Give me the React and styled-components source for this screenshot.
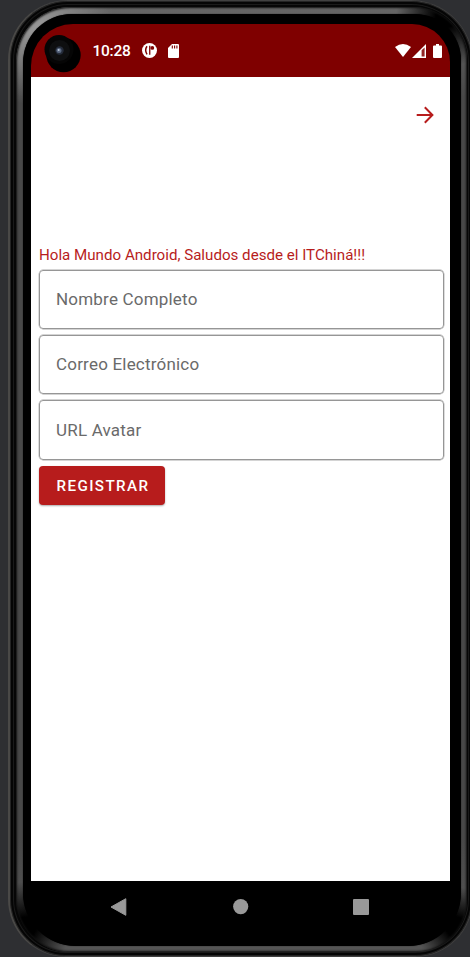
import React from "react";
import styled, { createGlobalStyle } from "styled-components";

const GlobalStyle = createGlobalStyle`
  * { box-sizing: border-box; }
  body { margin: 0; background: #2e2f32; font-family: Roboto, sans-serif; }
`;

const Desk = styled.main`
  width: 470px;
  height: 957px;
  overflow: hidden;
  padding-left: 8px;
  background: #2e2f32;
`;

const Casing = styled.div`
  width: 465px;
  height: 957px;
  padding: 6px 5px 4px 6px;
  border: 1px solid #414141;
  border-left: 2px solid #4a4947;
  border-radius: 60px 62px 58px 58px;
  background: #060606;
  box-shadow: inset 0 0 0 1px #242424, inset 0 0 0 3px #050505,
    inset 0 0 0 4px #1a1a1a;
`;

const Bezel = styled.div`
  height: 100%;
  padding: 7px 6px 6px 7px;
  border-radius: 55px 53px 51px 53px;
  background:
    radial-gradient(circle at 24px 24px, #9b9b9b 0, #77777700 75px),
    radial-gradient(circle at 10px 920px, #000 10px, #0000 45px),
    radial-gradient(circle at 440px 920px, #000 10px, #0000 40px),
    radial-gradient(circle at 430px 10px, #000 10px, #0000 50px),
    linear-gradient(#666, #484848 90px, #484848 830px, #555 930px);
  box-shadow: inset 0 0 2px 1px #111;
`;

const Glass = styled.div`
  height: 100%;
  padding: 10px 10px 0 8px;
  border-radius: 49px 46px 53px 53px;
  background: #000;
  box-shadow: 0 0 1px #000;
`;

const Screen = styled.div`
  width: 419px;
  height: 857px;
  display: flex;
  flex-direction: column;
`;

const StatusBar = styled.header`
  height: 53px;
  flex: none;
  display: flex;
  align-items: center;
  padding: 8px 8px 8px 13px;
  border-radius: 42px 38px 0 0;
  background: #7f0000;
  color: #fff;
`;

const CameraSlot = styled.span`
  padding-top: 7px;
`;

const Clock = styled.time`
  margin: 1px 12px 0 11.5px;
  width: 37.5px;
  font-size: 15.5px;
  font-weight: 500;
  line-height: 18px;
  letter-spacing: -0.25px;
  white-space: nowrap;
`;

const Glyph = styled.svg`
  display: block;
  flex: none;
  margin-left: ${(p) => p.$gap || 0}px;
`;

const Spacer = styled.span`
  flex: 1;
`;

const Content = styled.section`
  flex: 1;
  background: #fff;
`;

const Toolbar = styled.div`
  height: 76px;
  display: flex;
  justify-content: flex-end;
  align-items: center;
  padding-right: 16px;
`;

const IconButton = styled.button`
  display: block;
  border: 0;
  padding: 0;
  background: none;
  color: #b71c1c;
`;

const Form = styled.form`
  display: flex;
  flex-direction: column;
  align-items: flex-start;
  padding: 92px 6px 0 8px;
`;

const Greeting = styled.p`
  margin: 0 0 4px;
  height: 21px;
  line-height: 21px;
  font-size: 15.13px;
  white-space: nowrap;
  color: #b71c1c;
`;

const Field = styled.label`
  width: 404.5px;
  height: 59.3px;
  margin-bottom: 5.9px;
  padding: 0 16px 1px;
  border: 1px solid #969696;
  box-shadow: 0 0 0 0.4px #aaa;
  border-radius: 4px;
  display: flex;
  align-items: center;
  font-size: 17px;
  letter-spacing: 0.2px;
  color: #6a6a6a;
`;

const SubmitButton = styled.button`
  width: 126px;
  height: 39px;
  padding: 1px 0 0 2px;
  border: 0;
  border-radius: 4px;
  background: #b71c1c;
  box-shadow: 0 1px 2px #0005;
  color: #fff;
  font: 500 15.2px/39px Roboto, sans-serif;
  letter-spacing: 1.4px;
  white-space: nowrap;
`;

const NavBar = styled.nav`
  height: 52px;
  width: 419px;
  display: flex;
  align-items: center;
  padding-left: 79px;
`;

const fields = ["Nombre Completo", "Correo Electrónico", "URL Avatar"];

function CameraCutout() {
  return (
    <CameraSlot>
      <Glyph width="37" height="38" viewBox="0 0 37 38">
        <circle cx="19.5" cy="20" r="17.2" fill="#000" />
        <circle cx="15" cy="14.5" r="14.5" fill="#050505" />
        <circle cx="15.5" cy="15.5" r="10.5" fill="#0e0f10" />
        <circle cx="15.5" cy="15.5" r="4.2" fill="#252c3a" />
        <circle cx="15" cy="15.5" r="2.5" fill="#59677f" />
        <circle cx="14.7" cy="15" r="1" fill="#b7c5d5" />
      </Glyph>
    </CameraSlot>
  );
}

export default function App() {
  return (
    <Desk>
      <GlobalStyle />
      <Casing>
        <Bezel>
          <Glass>
            <Screen>
              <StatusBar>
                <CameraCutout />
                <Clock>10:28</Clock>
                <Glyph width="15" height="15" viewBox="0 0 15 15">
                  <circle cx="7.5" cy="7.5" r="7.5" fill="#fff" />
                  <path d="M5 3.2Q2.3 7 5 11.3" fill="none" stroke="#7f0000" strokeWidth="1.5" />
                  <path d="M7.1 2.8h1.3v9H7.1z" fill="#7f0000" />
                  <circle cx="10.3" cy="4.9" r="1.9" fill="#7f0000" />
                </Glyph>
                <Glyph $gap={11} width="11" height="14" viewBox="0 0 11 14">
                  <path d="M4 0h6q1 0 1 1v12q0 1-1 1H1q-1 0-1-1V4z" fill="#fff" />
                  <path d="M4.3 1.5v3M6.6 1.5v3M8.9 1.5v3" stroke="#7f0000" strokeWidth="1.1" />
                </Glyph>
                <Spacer />
                <Glyph width="16" height="13" viewBox="0 0 16 13">
                  <path d="M0 3Q8-3 16 3L8 13z" fill="#fff" />
                </Glyph>
                <Glyph $gap={1} width="14" height="14" viewBox="0 0 14 14">
                  <path d="M14 0v14H0z" fill="#fff" />
                  <path d="M9.6 6.2 12.6 3.4v9h-3z" fill="#7f0000" opacity=".85" />
                </Glyph>
                <Glyph $gap={7} width="9" height="14" viewBox="0 0 9 14">
                  <path d="M3 0h3v1.4h2q1 0 1 1V13q0 1-1 1H1q-1 0-1-1V2.4q0-1 1-1h2z" fill="#fff" />
                </Glyph>
              </StatusBar>
              <Content>
                <Toolbar>
                  <IconButton aria-label="Siguiente">
                    <Glyph width="18" height="18" viewBox="0 0 18 18">
                      <path d="M.7 9h15.5M8.8 1.3 16.4 9l-7.6 7.7" fill="none" stroke="currentColor" strokeWidth="2" />
                    </Glyph>
                  </IconButton>
                </Toolbar>
                <Form>
                  <Greeting>Hola Mundo Android, Saludos desde el ITChiná!!!</Greeting>
                  {fields.map((name) => (
                    <Field key={name}>{name}</Field>
                  ))}
                  <SubmitButton type="button">REGISTRAR</SubmitButton>
                </Form>
              </Content>
            </Screen>
            <NavBar>
              <Glyph width="17" height="18" viewBox="0 0 17 18">
                <path d="M1 9 15.8.7V17.3z" fill="#999" stroke="#999" strokeLinejoin="round" />
              </Glyph>
              <Glyph $gap={106} width="16" height="16" viewBox="0 0 16 16">
                <circle cx="7.7" cy="7.6" r="7.6" fill="#999" />
              </Glyph>
              <Glyph $gap={104} width="17" height="17" viewBox="0 0 17 17">
                <rect x="0" y="0" width="16" height="16" rx="1" fill="#999" />
              </Glyph>
            </NavBar>
          </Glass>
        </Bezel>
      </Casing>
    </Desk>
  );
}
